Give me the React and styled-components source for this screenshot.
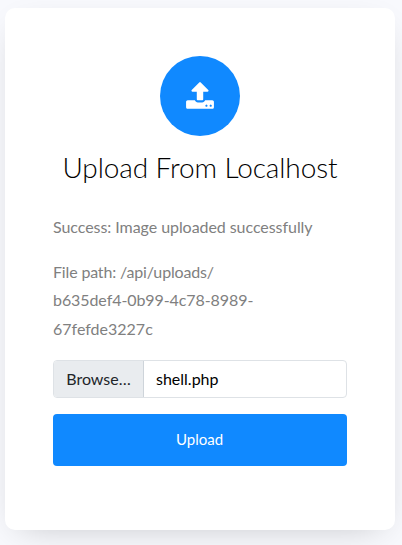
import React from 'react';
import styled, { createGlobalStyle } from 'styled-components';

const GlobalStyle = createGlobalStyle`
  * { box-sizing: border-box; }
  body {
    margin: 0;
    background: #f8f9fd;
    font-family: Lato, Arial, sans-serif;
    font-size: 16px;
    line-height: 1.8;
    color: gray;
    overflow: hidden;
  }
`;

const Page = styled.main`
  height: 545px;
  padding: 8px 7px 0 5px;
`;

const Card = styled.section`
  height: 522px;
  padding: 48px;
  background: #fff;
  border-radius: 10px;
  box-shadow: 0 10px 34px -15px rgba(0, 0, 0, 0.24);
`;

const IconBadge = styled.div`
  display: flex;
  align-items: center;
  justify-content: center;
  width: 80px;
  height: 80px;
  margin: 0 auto;
  border-radius: 50%;
  background: #1089ff;
  color: #fff;
`;

const Title = styled.h3`
  margin: 14px 0 0;
  font-size: 28px;
  font-weight: 300;
  line-height: 34px;
  letter-spacing: -0.1px;
  text-align: center;
  white-space: nowrap;
  color: #000;
`;

const Message = styled.p`
  margin: ${({ $top }) => $top}px 0 0;
  line-height: 28.8px;
  letter-spacing: -0.06px;
`;

const PathLine = styled.span`
  display: block;
  height: ${({ $height }) => $height}px;
  letter-spacing: ${({ $tracking }) => $tracking}px;
`;

const FileField = styled.div`
  display: flex;
  height: 38px;
  margin-top: 16px;
  overflow: hidden;
  border: 1px solid #dee2e6;
  border-radius: 4px;
  line-height: 36px;
  color: #000;
`;

const BrowseButton = styled.button`
  width: 90px;
  padding: 0;
  border: 0;
  border-right: 1px solid #ced4da;
  background: #e9ecef;
  font: inherit;
  color: #212529;
`;

const FileName = styled.span`
  padding-left: 12px;
`;

const UploadButton = styled.button`
  display: block;
  width: 100%;
  height: 52px;
  margin-top: 16px;
  padding: 0 1px 2px 0;
  border: 0;
  border-radius: 4px;
  background: #1089ff;
  font: 15px Lato, Arial, sans-serif;
  color: #fff;
`;

export default function App() {
  return (
    <>
      <GlobalStyle />
      <Page>
        <Card>
          <IconBadge>
            <svg width="30" height="30" viewBox="0 0 1792 1792" fill="currentColor">
              <path d="M1344 1472q0-26-19-45t-45-19-45 19-19 45 19 45 45 19 45-19 19-45zm256 0q0-26-19-45t-45-19-45 19-19 45 19 45 45 19 45-19 19-45zm128-224v320q0 40-28 68t-68 28h-1472q-40 0-68-28t-28-68v-320q0-40 28-68t68-28h427q21 56 70.500 92t110.500 36h256q61 0 110.500-36t70.500-92h427q40 0 68 28t28 68zm-325-648q-17 40-59 40h-256v448q0 26-19 45t-45 19h-256q-26 0-45-19t-19-45v-448h-256q-42 0-59-40-17-39 14-69l448-448q18-19 45-19t45 19l448 448q31 30 14 69z" />
            </svg>
          </IconBadge>
          <Title>Upload From Localhost</Title>
          <Message $top={29}>Success: Image uploaded successfully</Message>
          <Message $top={16}>
            <PathLine $height={28} $tracking={-0.16}>File path: /api/uploads/</PathLine>
            <PathLine $height={29.2} $tracking={-0.08}>b635def4-0b99-4c78-8989-</PathLine>
            <PathLine $height={29.2} $tracking={0}>67fefde3227c</PathLine>
          </Message>
          <FileField>
            <BrowseButton type="button">Browse…</BrowseButton>
            <FileName>shell.php</FileName>
          </FileField>
          <UploadButton type="button">Upload</UploadButton>
        </Card>
      </Page>
    </>
  );
}
